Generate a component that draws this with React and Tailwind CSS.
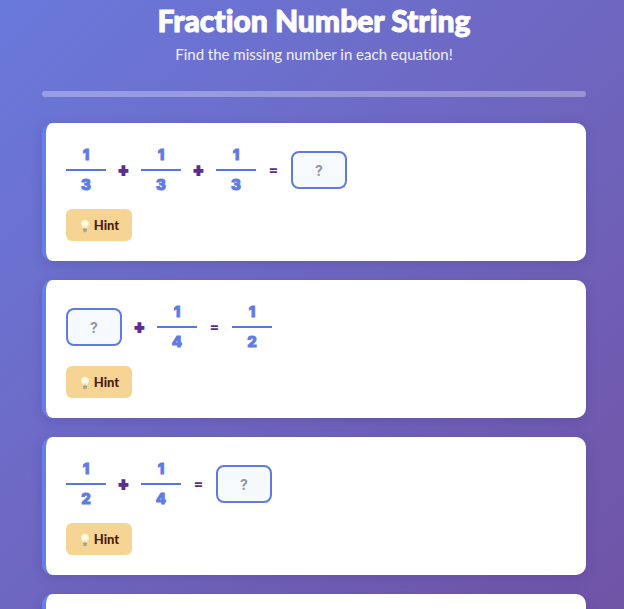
import React from "react";

function Fraction({ top, bottom }) {
  return (
    <div className="flex w-10 flex-col text-center font-['Inter',sans-serif] text-[15px] leading-6 font-extrabold text-[#5f7be4] [-webkit-text-stroke:1px_#5f7be4]">
      <span className="border-b-2 border-[#5577e0] pb-0.5">{top}</span>
      <span className="pt-0.5">{bottom}</span>
    </div>
  );
}

function Plus() {
  return (
    <span className="w-[11px] text-center text-base leading-6 font-black text-[#5b2d91] [-webkit-text-stroke:2px_#5b2d91]">
      +
    </span>
  );
}

function Equals() {
  return (
    <span className="w-[11px] text-center text-base leading-6 font-black text-[#5b2d91]">
      =
    </span>
  );
}

function Answer({ label }) {
  return (
    <input
      type="text"
      placeholder="?"
      aria-label={label}
      className="h-[38px] w-14 rounded-lg border-2 border-[#5f7be0] bg-[#f7fafc] text-center font-['Inter',sans-serif] text-sm font-bold text-[#5f7be4] outline-none placeholder:text-[#9295a3]"
    />
  );
}

function Bulb() {
  return (
    <svg width="12" height="14" viewBox="0 0 12 14" aria-hidden="true">
      <path
        d="M6 .8C3.3.8 2 2.6 2 4.7c0 2.2 1.7 3 2 4.9h4c.3-1.9 2-2.7 2-4.9C10 2.6 8.7.8 6 .8Z"
        fill="#fff3bd"
      />
      <ellipse cx="5.8" cy="4.3" rx="2.6" ry="2.7" fill="#fffef5" />
      <path d="M5.2 6.8 5.6 9h.8l.4-2.2" fill="none" stroke="#ecd594" strokeWidth=".5" />
      <path d="M4.1 9.3h3.8v2.6L6.9 13.2H5.1l-1-1.3Z" fill="#b9b6a8" />
      <path d="M4.2 10.6h3.6M4.4 12h3.2" stroke="#8b8a80" strokeWidth=".6" />
    </svg>
  );
}

function Card({ children }) {
  return (
    <section className="shrink-0 rounded-[10px] border-l-4 border-[#667eea] bg-white p-5 shadow-[0_3px_12px_rgba(50,30,110,0.18)]">
      {children}
    </section>
  );
}

function Problem({ children }) {
  return (
    <Card>
      <div className="flex h-[54px] items-center gap-3">{children}</div>
      <button
        type="button"
        className="mt-3 flex h-8 w-[66px] items-center justify-center gap-[3px] rounded-md bg-[#f6d494] pt-0.5 text-[13px] font-black text-[#4a1d0c]"
      >
        <Bulb />
        Hint
      </button>
    </Card>
  );
}

export default function App() {
  return (
    <main className="flex h-screen flex-col overflow-hidden bg-linear-135 from-[#6979dc] to-[#7054a6] pr-[38px] pl-[42px] font-['Lato','Open_Sans',sans-serif] [font-variant-ligatures:none]">
      <header className="text-center text-white">
        <h1 className="pt-1 text-[30px] leading-8 font-black [-webkit-text-stroke:1px_white]">
          Fraction Number String
        </h1>
        <p className="mt-2 text-[15px] leading-5 text-[#f1f0fc]">
          Find the missing number in each equation!
        </p>
      </header>
      <div
        role="progressbar"
        aria-label="Progress"
        aria-valuenow={0}
        aria-valuemin={0}
        aria-valuemax={100}
        className="mt-[27px] h-1.5 shrink-0 rounded-full bg-white/30"
      />
      <div className="mt-[26px] flex flex-col gap-[19px]">
        <Problem>
          <Fraction top="1" bottom="3" />
          <Plus />
          <Fraction top="1" bottom="3" />
          <Plus />
          <Fraction top="1" bottom="3" />
          <Equals />
          <Answer label="Sum of the three fractions" />
        </Problem>
        <Problem>
          <Answer label="Missing first fraction" />
          <Plus />
          <Fraction top="1" bottom="4" />
          <Equals />
          <Fraction top="1" bottom="2" />
        </Problem>
        <Problem>
          <Fraction top="1" bottom="2" />
          <Plus />
          <Fraction top="1" bottom="4" />
          <Equals />
          <Answer label="Sum of the two fractions" />
        </Problem>
        <Card />
      </div>
    </main>
  );
}
